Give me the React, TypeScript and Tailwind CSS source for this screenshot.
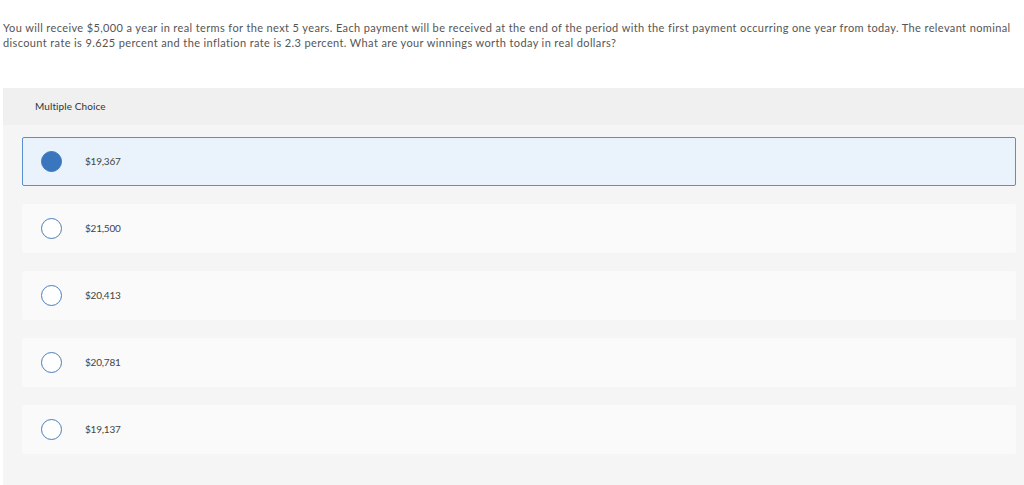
import React, { useState } from 'react';

const options = ['$19,367', '$21,500', '$20,413', '$20,781', '$19,137'];

const App: React.FC = () => {
  const [selected, setSelected] = useState(0);

  return (
    <div className="w-[1024px] h-[485px] overflow-hidden bg-white font-['Lato','Liberation_Sans',sans-serif]">
      <p className="pl-[3px] pt-[20px] text-[11px] leading-[15px] text-[#555] tracking-[0.38px] whitespace-nowrap">
        You will receive $5,000 a year in real terms for the next 5 years. Each payment will be received at the end of the period with the first payment occurring one year from today. The relevant nominal
        <br />
        discount rate is 9.625 percent and the inflation rate is 2.3 percent. What are your winnings worth today in real dollars?
      </p>

      <div className="ml-[3px] mt-[38px] bg-[#f5f5f5] h-[400px]">
        <div className="h-[37px] bg-[#f0f0f0] flex items-center pl-[32px] text-[10px] text-[#333] tracking-[0.1px]">
          Multiple Choice
        </div>

        <div className="flex flex-col gap-[18px] pt-[12px] pl-[19px] pr-[8px]">
          {options.map((opt, i) => {
            const active = i === selected;
            return (
              <button
                key={opt}
                onClick={() => setSelected(i)}
                className={
                  active
                    ? 'h-[49px] flex items-center text-left bg-[#eaf2fc] border border-[#5a8fcb] rounded-[2px]'
                    : 'h-[49px] flex items-center text-left bg-[#fafafa] border border-transparent rounded-[2px]'
                }
              >
                <span
                  className={
                    active
                      ? 'ml-[18px] w-[21px] h-[21px] rounded-full bg-[#3a76be] border border-[#3a76be]'
                      : 'ml-[18px] w-[21px] h-[21px] rounded-full bg-white border-[1.5px] border-[#4a7fb8]'
                  }
                />
                <span className="ml-[23px] text-[10px] text-[#444] tracking-[-0.2px]">{opt}</span>
              </button>
            );
          })}
        </div>
      </div>
    </div>
  );
};

export default App;
